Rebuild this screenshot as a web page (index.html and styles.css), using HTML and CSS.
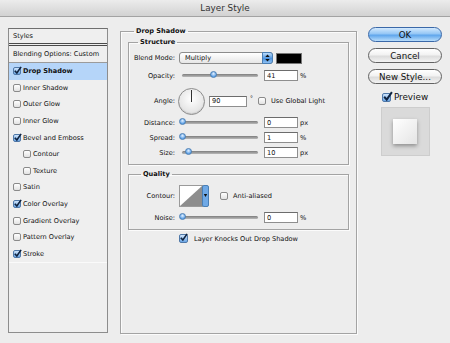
FILE: index.html
```html
<!DOCTYPE html>
<html lang="en">
<head>
    <meta charset="UTF-8">
    <title>Layer Style</title>
    <link rel="stylesheet" href="styles.css">
</head>
<body>
    <div class="titlebar">Layer Style</div>
    <div class="dialog">
        <div class="styles-panel">
            <div class="styles-head">Styles</div>
            <div class="styles-row blending">Blending Options: Custom</div>
            <div class="styles-row selected"><span class="check on"><svg viewBox="0 0 10 10"><path d="M2 5.2 L4.3 7.8 L9 1"/></svg></span><b>Drop Shadow</b></div>
            <div class="styles-row"><span class="check"></span>Inner Shadow</div>
            <div class="styles-row"><span class="check"></span>Outer Glow</div>
            <div class="styles-row"><span class="check"></span>Inner Glow</div>
            <div class="styles-row"><span class="check on"><svg viewBox="0 0 10 10"><path d="M2 5.2 L4.3 7.8 L9 1"/></svg></span>Bevel and Emboss</div>
            <div class="styles-row sub"><span class="check"></span>Contour</div>
            <div class="styles-row sub"><span class="check"></span>Texture</div>
            <div class="styles-row"><span class="check"></span>Satin</div>
            <div class="styles-row"><span class="check on"><svg viewBox="0 0 10 10"><path d="M2 5.2 L4.3 7.8 L9 1"/></svg></span>Color Overlay</div>
            <div class="styles-row"><span class="check"></span>Gradient Overlay</div>
            <div class="styles-row"><span class="check"></span>Pattern Overlay</div>
            <div class="styles-row last"><span class="check on"><svg viewBox="0 0 10 10"><path d="M2 5.2 L4.3 7.8 L9 1"/></svg></span>Stroke</div>
        </div>

        <fieldset class="group main">
            <legend>Drop Shadow</legend>

            <fieldset class="group structure">
                <legend>Structure</legend>
                <div class="row blend-row">
                    <label class="lbl">Blend Mode:</label>
                    <div class="select">Multiply
                        <span class="select-arrows"><svg viewBox="0 0 10 11"><path d="M5 1.5 L7.5 4.3 L2.5 4.3 Z M5 9.5 L7.5 6.7 L2.5 6.7 Z"/></svg></span>
                    </div>
                    <span class="swatch"></span>
                </div>
                <div class="row opacity-row">
                    <label class="lbl">Opacity:</label>
                    <div class="slider"><span class="knob" style="left: 41%"></span></div>
                    <input class="field" type="text" value="41">
                    <span class="unit">%</span>
                </div>
                <div class="row angle-row">
                    <label class="lbl">Angle:</label>
                    <div class="dial"><span class="dial-hand"></span></div>
                    <input class="field wide" type="text" value="90">
                    <span class="deg">°</span>
                    <span class="check"></span>
                    <span class="check-text">Use Global Light</span>
                </div>
                <div class="row distance-row">
                    <label class="lbl">Distance:</label>
                    <div class="slider"><span class="knob" style="left: 1%"></span></div>
                    <input class="field" type="text" value="0">
                    <span class="unit">px</span>
                </div>
                <div class="row spread-row">
                    <label class="lbl">Spread:</label>
                    <div class="slider"><span class="knob" style="left: 1%"></span></div>
                    <input class="field" type="text" value="1">
                    <span class="unit">%</span>
                </div>
                <div class="row size-row">
                    <label class="lbl">Size:</label>
                    <div class="slider"><span class="knob" style="left: 9%"></span></div>
                    <input class="field" type="text" value="10">
                    <span class="unit">px</span>
                </div>
            </fieldset>

            <fieldset class="group quality">
                <legend>Quality</legend>
                <div class="row contour-row">
                    <label class="lbl">Contour:</label>
                    <div class="contour">
                        <svg viewBox="0 0 30 22">
                            <rect x="0.5" y="0.5" width="23" height="21" fill="#fff" stroke="#9a9a9a"/>
                            <path d="M1 21 L23 1 L23 21 Z" fill="#8d8d8d"/>
                            <rect x="23.5" y="0.5" width="6" height="21" rx="1.5" fill="#6fa9e6" stroke="#4a7fb5"/>
                            <path d="M24.8 9 L28.2 9 L26.5 12 Z" fill="#111"/>
                        </svg>
                    </div>
                    <span class="check"></span>
                    <span class="check-text">Anti-aliased</span>
                </div>
                <div class="row noise-row">
                    <label class="lbl">Noise:</label>
                    <div class="slider"><span class="knob" style="left: 1%"></span></div>
                    <input class="field" type="text" value="0">
                    <span class="unit">%</span>
                </div>
            </fieldset>

            <div class="knockout">
                <span class="check on"><svg viewBox="0 0 10 10"><path d="M2 5.2 L4.3 7.8 L9 1"/></svg></span>
                <span class="check-text">Layer Knocks Out Drop Shadow</span>
            </div>
        </fieldset>

        <div class="actions">
            <button class="btn primary">OK</button>
            <button class="btn">Cancel</button>
            <button class="btn">New Style...</button>
            <div class="preview-toggle">
                <span class="check on big"><svg viewBox="0 0 10 10"><path d="M2 5.2 L4.3 7.8 L9 1"/></svg></span>
                Preview
            </div>
            <div class="preview-box"><div class="preview-swatch"></div></div>
        </div>
    </div>
</body>
</html>
```

FILE: styles.css
```css
body {
    margin: 0;
    width: 450px;
    height: 343px;
    overflow: hidden;
    background-color: #ededed;
    font-family: "DejaVu Sans", sans-serif;
    font-size: 6.6px;
    color: #111;
}
.titlebar {
    height: 16px;
    line-height: 17px;
    text-align: center;
    font-size: 8.8px;
    color: #333;
    background: linear-gradient(#ececec, #d2d2d2);
    border-bottom: 1px solid #a3a3a3;
}
.dialog {
    display: flex;
    align-items: flex-start;
    padding: 11px 0 0 8px;
}

/* left list of effects */
.styles-panel {
    box-sizing: border-box;
    width: 100px;
    height: 305px;
    border: 1px solid #8d8d8d;
    border-top-color: #6f6f6f;
    background-color: #efefef;
}
.styles-head {
    height: 14px;
    line-height: 14px;
    padding-left: 4px;
    border-bottom: 3px double #4a4a4a;
}
.styles-row {
    display: flex;
    align-items: center;
    height: 16.6px;
    padding-left: 4px;
    white-space: nowrap;
}
.styles-row.blending {
    height: 16px;
    border-bottom: 1px solid #9b9b9b;
}
.styles-row.selected {
    background-color: #b5d5f9;
}
.styles-row.sub {
    padding-left: 14px;
}
.styles-row.last {
    border-bottom: 1px solid #fafafa;
}
.styles-row b {
    font-weight: bold;
}

/* checkboxes */
.check {
    box-sizing: border-box;
    display: inline-block;
    flex: none;
    position: relative;
    width: 8px;
    height: 8px;
    margin-right: 2px;
    border: 1px solid #8a8a8a;
    border-radius: 2px;
    background: linear-gradient(#ffffff, #e2e2e2);
}
.check.on {
    border-color: #4f78a8;
    background: linear-gradient(#cfe4fb, #6aa6e6);
}
.check svg {
    position: absolute;
    left: -1px;
    top: -2px;
    width: 9px;
    height: 9px;
}
.check svg path {
    fill: none;
    stroke: #0f2340;
    stroke-width: 1.8;
}
.check.big {
    width: 9px;
    height: 9px;
}
.check.big svg {
    width: 11px;
    height: 11px;
    top: -3px;
}

/* group boxes */
.group {
    box-sizing: border-box;
    min-width: 0;
    margin: 0;
    padding: 0;
    border: 1px solid #a3a3a3;
    box-shadow: inset 1px 1px 0 #fbfbfb, 1px 1px 0 #fbfbfb;
}
.group legend {
    padding: 0 2px;
    line-height: 8px;
    font-weight: bold;
}
.main {
    width: 237px;
    height: 307px;
    margin: -1px 0 0 12px;
    padding: 3px 8px 0 7px;
}
.main > legend {
    margin-left: 6px;
}
.structure {
    width: 221px;
    padding: 6px 0 6px 0;
}
.structure > legend {
    margin-left: 9px;
}
.quality {
    width: 221px;
    margin-top: 5px;
    padding: 7px 0 6px 0;
}
.quality > legend {
    margin-left: 12px;
}

/* control rows */
.row {
    display: flex;
    align-items: center;
    height: 11px;
    white-space: nowrap;
}
.lbl {
    width: 46px;
    text-align: right;
}
.blend-row {
    height: 12px;
}
.opacity-row {
    margin-top: 6px;
}
.angle-row {
    height: 28px;
    margin-top: 6px;
}
.distance-row {
    margin-top: 2px;
}
.spread-row,
.size-row {
    margin-top: 4px;
}
.contour-row {
    height: 22px;
}
.noise-row {
    margin-top: 5px;
}

.select {
    box-sizing: border-box;
    position: relative;
    width: 94px;
    height: 12px;
    margin-left: 4px;
    padding-left: 5px;
    line-height: 10px;
    border: 1px solid #8c8c8c;
    border-radius: 3px;
    background: linear-gradient(#ffffff, #e6e6e6);
}
.select-arrows {
    position: absolute;
    right: -1px;
    top: -1px;
    width: 11px;
    height: 12px;
    border-radius: 0 3px 3px 0;
    border: 1px solid #4a7fb5;
    box-sizing: border-box;
    background: linear-gradient(#bcdcfb, #4c93e0 55%, #8fc1f3);
}
.select-arrows svg {
    display: block;
    width: 9px;
    height: 10px;
}
.select-arrows path {
    fill: #111;
}
.swatch {
    width: 26px;
    height: 11px;
    margin-left: 3px;
    background-color: #000;
    border: 1px solid #777;
    box-sizing: border-box;
}

.slider {
    position: relative;
    width: 76px;
    height: 3px;
    margin-left: 7px;
    border-radius: 2px;
    background: linear-gradient(#7d7d7d, #b9b9b9);
}
.knob {
    position: absolute;
    top: -3px;
    width: 7px;
    height: 7px;
    margin-left: -3.5px;
    border-radius: 50%;
    box-sizing: border-box;
    border: 1px solid #4a7fb5;
    background: radial-gradient(circle at 50% 35%, #e4f1ff, #5da0e6 70%);
}
.field {
    box-sizing: border-box;
    width: 34px;
    height: 11px;
    margin: 0 0 0 6px;
    padding: 0 2px;
    font-family: inherit;
    font-size: 6.6px;
    color: #111;
    border: 1px solid #8e8e8e;
    border-top-color: #6c6c6c;
    background-color: #fff;
    outline: none;
}
.field.wide {
    width: 38px;
    margin-left: 4px;
}
.unit {
    margin-left: 2px;
}
.deg {
    align-self: flex-start;
    margin: 7px 0 0 3px;
    font-size: 6px;
}
.angle-row .check {
    margin-left: 5px;
    margin-right: 5px;
}
.dial {
    box-sizing: border-box;
    position: relative;
    width: 27px;
    height: 27px;
    margin-left: 3px;
    border-radius: 50%;
    border: 1px solid #8c8c8c;
    background: radial-gradient(circle at 50% 40%, #ffffff, #e2e2e2 75%, #cdcdcd);
    box-shadow: inset 0 -1px 1px rgba(0, 0, 0, 0.1);
}
.dial-hand {
    position: absolute;
    left: 12px;
    top: 1px;
    width: 1px;
    height: 12px;
    background-color: #333;
}

.contour {
    width: 30px;
    height: 22px;
    margin-left: 4px;
}
.contour svg {
    display: block;
    width: 30px;
    height: 22px;
}
.contour-row .check {
    margin-left: 11px;
    margin-right: 5px;
}

.knockout {
    display: flex;
    align-items: center;
    justify-content: center;
    width: 221px;
    height: 9px;
    margin-top: 4px;
}
.knockout .check {
    width: 9px;
    height: 9px;
    margin-right: 6px;
}

/* buttons column */
.actions {
    display: flex;
    flex-direction: column;
    align-items: center;
    width: 74px;
    margin-left: 11px;
    margin-top: -1px;
}
.btn {
    width: 74px;
    height: 15px;
    margin: 0 0 6px 0;
    padding: 0;
    font-family: inherit;
    font-size: 8.7px;
    color: #111;
    border: 1px solid #626262;
    border-radius: 8px;
    background: linear-gradient(#ffffff, #f2f2f2 45%, #dcdcdc 55%, #f3f3f3);
}
.btn.primary {
    border-color: #3a68a8;
    background: linear-gradient(#d3e9fd, #94c6f5 45%, #5fa6ec 55%, #b9ddfb);
}
.preview-toggle {
    display: flex;
    align-items: center;
    margin-top: 2px;
    font-size: 8.8px;
    height: 10px;
}
.preview-toggle .check {
    margin-right: 3px;
}
.preview-box {
    display: flex;
    align-items: center;
    justify-content: center;
    box-sizing: border-box;
    width: 49px;
    height: 49px;
    margin-top: 5px;
    border: 1px solid #cdcdcd;
    background-color: #dadada;
}
.preview-swatch {
    width: 24px;
    height: 25px;
    background: linear-gradient(135deg, #ffffff, #e4e4e4);
    box-shadow: 0 2px 4px rgba(0, 0, 0, 0.35);
}
```
